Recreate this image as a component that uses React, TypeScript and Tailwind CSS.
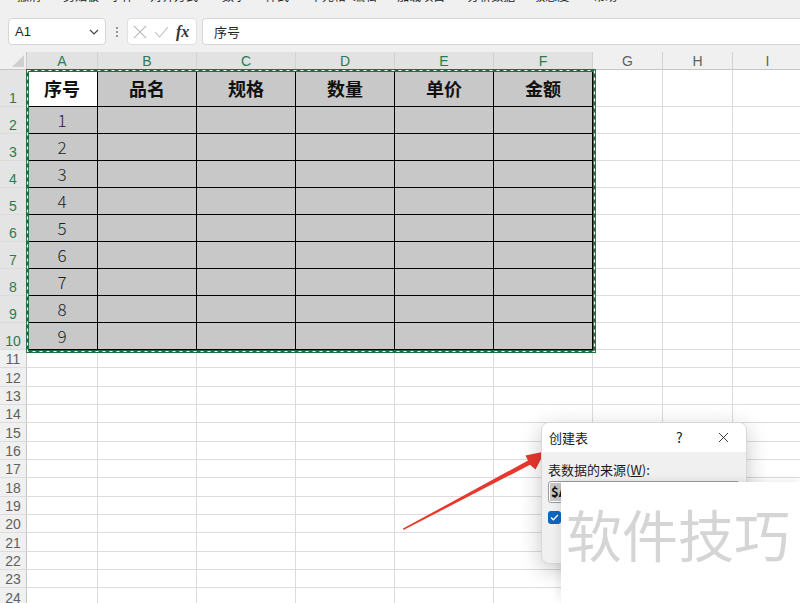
import { X } from 'lucide-react';

const cols = [
  { l: 'A', w: 71, sel: true },
  { l: 'B', w: 99, sel: true },
  { l: 'C', w: 99, sel: true },
  { l: 'D', w: 99, sel: true },
  { l: 'E', w: 99, sel: true },
  { l: 'F', w: 99, sel: true },
  { l: 'G', w: 70, sel: false },
  { l: 'H', w: 70, sel: false },
  { l: 'I', w: 70, sel: false },
];

const heads = ['序号', '品名', '规格', '数量', '单价', '金额'];

// ribbon group labels, only their bottom edge is visible
const ribbon: [number, string][] = [
  [17, '撤消'],
  [63, '剪贴板'],
  [110, '字体'],
  [150, '对齐方式'],
  [222, '数字'],
  [265, '样式'],
  [310, '单元格'],
  [353, '编辑'],
  [397, '加载项目'],
  [467, '分析数据'],
  [533, '敏感度'],
  [593, '帮助'],
];

const ui = "font-['Noto_Sans_CJK_SC','Noto_Sans',sans-serif]";
const latin = "font-['Liberation_Sans','Noto_Sans_CJK_SC',sans-serif]";

function RowHeader({ n, sel, h }: { n: number; sel: boolean; h: string }) {
  return (
    <div
      className={`${h} w-[27px] shrink-0 flex items-end justify-center pb-[1px] border-r border-b border-r-[#c6c6c6] border-b-[#dcdcdc] text-[14px] leading-none ${latin} ${
        sel ? 'bg-[#e4e4e4] text-[#2f7a4d]' : 'bg-[#f0f0f0] text-[#616161]'
      }`}
    >
      {n}
    </div>
  );
}

function TableRow({ r }: { r: number }) {
  const h = r === 1 ? 'h-[37px]' : 'h-[27px]';
  return (
    <div className="flex">
      <RowHeader n={r} sel h={h} />
      {cols.map((c, i) => {
        if (!c.sel)
          return (
            <div key={c.l} style={{ width: c.w }} className={`${h} shrink-0 border-r border-b border-[#dcdcdc]`} />
          );
        const white = r === 1 && i === 0;
        return (
          <div
            key={c.l}
            style={{ width: c.w }}
            className={`${h} shrink-0 border-r border-b border-black flex items-center justify-center ${ui} ${
              white ? 'bg-white' : 'bg-[#c8c8c8]'
            } ${r === 1 ? 'text-[18px] font-bold text-[#111]' : 'text-[17px] font-light text-[#222]'}`}
          >
            {r === 1 ? heads[i] : i === 0 ? r - 1 : ''}
          </div>
        );
      })}
    </div>
  );
}

function EmptyRow({ r }: { r: number }) {
  return (
    <div className="flex">
      <RowHeader n={r} sel={false} h="h-[18.35px]" />
      {cols.map((c) => (
        <div key={c.l} style={{ width: c.w }} className="h-[18.35px] shrink-0 border-r border-b border-[#dcdcdc]" />
      ))}
    </div>
  );
}

export default function App() {
  return (
    <div className={`relative w-[800px] h-[603px] overflow-hidden bg-white ${ui}`}>
      {/* ribbon tail */}
      <div className="h-[17px] bg-[#f0f0f0] overflow-hidden">
        <div className="flex -mt-[10px] text-[12px] leading-[12px] text-[#222]">
          {ribbon.map(([x, t], i) => (
            <span
              key={t}
              style={{ marginLeft: i === 0 ? x : x - ribbon[i - 1][0] - ribbon[i - 1][1].length * 12 }}
              className="shrink-0"
            >
              {t}
            </span>
          ))}
        </div>
      </div>

      {/* formula bar */}
      <div className="h-[35px] bg-[#f0f0f0] flex items-start pt-[1px]">
        <div className="ml-[8px] w-[98px] h-[27px] bg-white border border-[#d6d6d6] rounded-[4px] flex items-center pl-[6px] pr-[6px] justify-between">
          <span className={`text-[13px] text-[#262626] ${latin}`}>A1</span>
          <svg width="10" height="6" viewBox="0 0 10 6">
            <path d="M1 1l4 4 4-4" fill="none" stroke="#444" strokeWidth="1.2" />
          </svg>
        </div>
        <div className="w-[21px] h-[27px] flex flex-col items-center justify-center gap-[2px]">
          <span className="w-[2px] h-[2px] bg-[#777] rounded-full" />
          <span className="w-[2px] h-[2px] bg-[#777] rounded-full" />
          <span className="w-[2px] h-[2px] bg-[#777] rounded-full" />
        </div>
        <div className="w-[70px] h-[27px] bg-white border border-[#e0e0e0] rounded-[4px] flex items-center pl-[5px] gap-[7px]">
          <svg width="14" height="14" viewBox="0 0 14 14">
            <path d="M1 1l12 12M13 1L1 13" stroke="#bdbdbd" strokeWidth="1.1" />
          </svg>
          <svg width="15" height="12" viewBox="0 0 15 12">
            <path d="M1 6l4.5 5L14 1" fill="none" stroke="#bdbdbd" strokeWidth="1.1" />
          </svg>
          <span className="font-['Liberation_Serif',serif] italic text-[16px] text-[#333] font-semibold leading-none">fx</span>
        </div>
        <div className="ml-[5px] flex-1 h-[27px] bg-white border border-r-0 border-[#d6d6d6] rounded-l-[4px] flex items-center pl-[11px]">
          <span className="text-[13px] text-[#262626]">序号</span>
        </div>
      </div>

      {/* column headers */}
      <div className="flex">
        <div className="w-[27px] h-[18px] shrink-0 bg-[#f0f0f0] border-r border-b border-[#c6c6c6] flex items-end justify-end pr-[2px] pb-[2px]">
          <svg width="12" height="12" viewBox="0 0 12 12">
            <path d="M12 0L12 12L0 12Z" fill="#d0d0d0" />
          </svg>
        </div>
        {cols.map((c) => (
          <div
            key={c.l}
            style={{ width: c.w }}
            className={`h-[18px] shrink-0 border-r border-b border-r-[#d2d2d2] border-b-[#c6c6c6] flex items-center justify-center text-[14px] leading-none ${latin} ${
              c.sel ? 'bg-[#e2e2e2] text-[#2f7a4d]' : 'bg-[#f0f0f0] text-[#616161]'
            }`}
          >
            {c.l}
          </div>
        ))}
      </div>

      {/* sheet body */}
      {Array.from({ length: 10 }, (_, i) => (
        <TableRow key={i} r={i + 1} />
      ))}
      {Array.from({ length: 14 }, (_, i) => (
        <EmptyRow key={i} r={i + 11} />
      ))}

      {/* copy marquee around A1:F10 */}
      <svg className="absolute left-[25px] top-[68px] pointer-events-none" width="572" height="286">
        <rect x="2.5" y="2.5" width="567" height="281" fill="none" stroke="#1f6e43" strokeWidth="3" />
        <rect x="2.5" y="2.5" width="567" height="281" fill="none" stroke="#fff" strokeWidth="1.2" strokeDasharray="3 4" />
      </svg>

      {/* red arrow */}
      <svg className="absolute left-0 top-0 pointer-events-none" width="800" height="603">
        <polygon
          points="403.5,530 530,464.8 535.5,469.5 545,451.5 525.5,455.5 528,460.5 403,528.6"
          fill="#e8382d"
        />
      </svg>

      {/* create table dialog */}
      <div className="absolute left-[541px] top-[422px] w-[206px] h-[142px] rounded-[8px] overflow-hidden bg-[#f0f0f0] border border-[#d8d8d8] shadow-[0_6px_22px_rgba(0,0,0,0.22)]">
        <div className="h-[29px] bg-white flex items-center pl-[7px]">
          <span className="text-[13px] text-[#1a1a1a] flex-1">创建表</span>
          <span className="text-[14px] text-[#1a1a1a] w-[12px] mr-[27px]">?</span>
          <X size={17} strokeWidth={1.2} className="text-[#1a1a1a] mr-[14px]" />
        </div>
        <div className="px-[6px] pt-[9px]">
          <div className="text-[13px] leading-[18px] text-[#1a1a1a]">
            表数据的来源(<span className="underline">W</span>):
          </div>
          <div className="mt-[2px] h-[22px] bg-white border border-[#9a9a9a] rounded-[3px] flex items-center pl-[1px]">
            <span className="bg-[#c8c8c8] text-[13px] font-bold text-[#111] leading-[18px] px-[1px]">$A</span>
          </div>
          <div className="mt-[8px] flex items-center gap-[6px]">
            <div className="w-[13px] h-[13px] rounded-[3px] bg-[#0f65c0] flex items-center justify-center">
              <svg width="9" height="7" viewBox="0 0 9 7">
                <path d="M1 3.5l2.3 2.3L8 1" fill="none" stroke="#fff" strokeWidth="1.3" />
              </svg>
            </div>
          </div>
        </div>
      </div>

      {/* watermark card */}
      <div className="absolute left-[561px] top-[482px] w-[240px] h-[121px] bg-white shadow-[-3px_-2px_8px_rgba(0,0,0,0.08)] pl-[5px] pt-[23px]">
        <div className="text-[56px] leading-none text-[#d5d5d5] whitespace-nowrap">软件技巧</div>
      </div>
    </div>
  );
}
